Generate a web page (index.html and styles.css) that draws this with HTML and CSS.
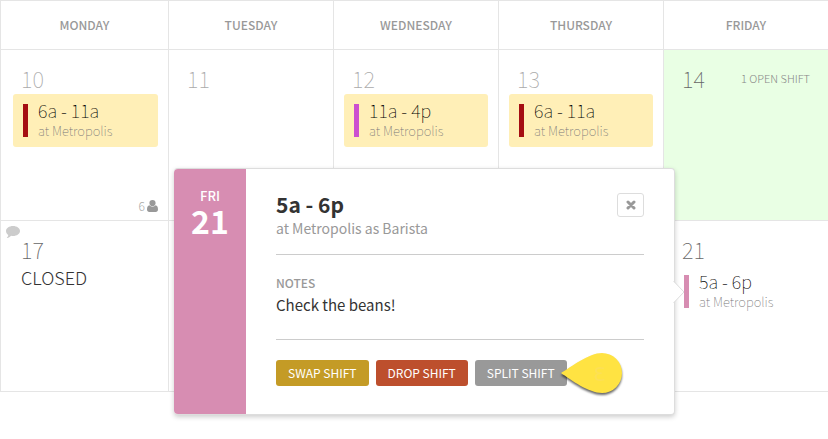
FILE: index.html
```html
<!DOCTYPE html>
<html lang="en">
<head>
  <meta charset="UTF-8" />
  <meta name="viewport" content="width=device-width, initial-scale=1" />
  <title>Schedule</title>
  <link rel="stylesheet" href="styles.css">
</head>
<body>

<!-- Calendar -->
<table class="calendar">
  <colgroup>
    <col class="first-col">
    <col>
    <col>
    <col>
    <col>
  </colgroup>
  <thead>
    <tr>
      <th scope="col">MONDAY</th>
      <th scope="col">TUESDAY</th>
      <th scope="col">WEDNESDAY</th>
      <th scope="col">THURSDAY</th>
      <th scope="col">FRIDAY</th>
    </tr>
  </thead>
  <tbody>
    <tr>
      <td class="past">
        <div class="day">
          <div class="day-head"><span class="date">10</span></div>
          <a href="#" class="shift mine red">
            <span class="time">6a - 11a</span>
            <span class="place">at Metropolis</span>
          </a>
          <div class="staff">
            <span>6</span>
            <svg width="11" height="12" viewBox="0 0 11 12" aria-hidden="true">
              <circle cx="5.5" cy="3.1" r="3.1"/>
              <path d="M2.4 5.3C.8 5.6 0 7 0 9.6 0 11.2.9 12 2.3 12h6.4c1.4 0 2.3-.8 2.3-2.4 0-2.6-.8-4-2.4-4.3-.8.9-1.8 1.4-3.1 1.4s-2.300-.5-3.100-1.400z"/>
            </svg>
          </div>
        </div>
      </td>
      <td class="past">
        <div class="day">
          <div class="day-head"><span class="date">11</span></div>
        </div>
      </td>
      <td class="past">
        <div class="day">
          <div class="day-head"><span class="date">12</span></div>
          <a href="#" class="shift mine purple">
            <span class="time">11a - 4p</span>
            <span class="place">at Metropolis</span>
          </a>
        </div>
      </td>
      <td class="past">
        <div class="day">
          <div class="day-head"><span class="date">13</span></div>
          <a href="#" class="shift mine red">
            <span class="time">6a - 11a</span>
            <span class="place">at Metropolis</span>
          </a>
        </div>
      </td>
      <td class="open">
        <div class="day">
          <div class="day-head">
            <span class="date">14</span>
            <a href="#" class="open-shift">1 OPEN SHIFT</a>
          </div>
        </div>
      </td>
    </tr>
    <tr>
      <td>
        <svg class="comment" width="14" height="12" viewBox="0 0 14 12" aria-hidden="true">
          <path d="M7 0c3.900 0 7 2.200 7 5s-3.100 5-7 5c-.7 0-1.300-.1-1.900-.2C4 10.900 2.700 11.700 1.200 12c-.4 0-.5-.3-.2-.6.6-.6 1.100-1.200 1.300-2.500C.9 8 0 6.600 0 5c0-2.800 3.100-5 7-5z"/>
        </svg>
        <div class="day">
          <div class="day-head"><span class="date">17</span></div>
          <div class="closed">CLOSED</div>
        </div>
      </td>
      <td></td>
      <td></td>
      <td></td>
      <td>
        <div class="day">
          <div class="day-head"><span class="date">21</span></div>
          <a href="#" class="shift pink">
            <span class="time">5a - 6p</span>
            <span class="place">at Metropolis</span>
          </a>
        </div>

        <!-- Shift details popover -->
        <section class="popover">
          <div class="popover-date">
            <span class="weekday">FRI</span>
            <span class="number">21</span>
          </div>
          <div class="popover-body">
            <div class="summary">
              <div>
                <h2>5a - 6p</h2>
                <p>at Metropolis as Barista</p>
              </div>
              <button class="close-btn" type="button" aria-label="Close">
                <svg width="10" height="10" viewBox="0 0 10 10" aria-hidden="true">
                  <path d="M2 2l6 6M8 2l-6 6"/>
                </svg>
              </button>
            </div>
            <div class="notes">
              <h3>NOTES</h3>
              <p>Check the beans!</p>
            </div>
            <div class="actions">
              <button class="btn swap" type="button">SWAP SHIFT</button>
              <button class="btn drop" type="button">DROP SHIFT</button>
              <div class="split-wrap">
                <button class="btn split" type="button">SPLIT SHIFT</button>
                <svg class="marker" width="62" height="42" viewBox="0 0 62 42" aria-hidden="true">
                  <path d="M0 20C10 14 28 0 41 0a20 20 0 0 1 0 40C28 40 10 27 0 20z"/>
                  <text x="32" y="28">Ɛ</text>
                </svg>
              </div>
            </div>
          </div>
          <svg class="arrow" width="12" height="24" viewBox="0 0 12 24" aria-hidden="true">
            <path class="arrow-fill" d="M0 1l11 11L0 23z"/>
            <path class="arrow-line" d="M0.500 1l10.500 11L0.500 23"/>
          </svg>
        </section>
      </td>
    </tr>
  </tbody>
</table>

</body>
</html>
```

FILE: styles.css
```css
* {
  box-sizing: border-box;
}

body {
  margin: 0;
  min-height: 100vh;
  font-family: "Noto Sans CJK SC", "Noto Sans", sans-serif;
  background-color: #fff;
  color: #333;
  overflow-x: hidden;
}

a {
  color: inherit;
  text-decoration: none;
}

h2, h3, p {
  margin: 0;
}

button {
  font-family: inherit;
  cursor: pointer;
}

/* Calendar, its right border runs off the edge of the window */
.calendar {
  width: calc(100% + 1px);
  table-layout: fixed;
  border-collapse: separate;
  border-spacing: 0;
  border-top: 1px solid #e5e5e5;
  border-left: 1px solid #e5e5e5;
}

.first-col {
  width: 168px;
}

.calendar th {
  height: 49px;
  padding: 0;
  border-right: 1px solid #e5e5e5;
  border-bottom: 1px solid #e5e5e5;
  font-size: 12px;
  line-height: 16px;
  font-weight: 500;
  color: #999;
}

.calendar td {
  position: relative;
  height: 171px;
  padding: 11px 10px 6px;
  border-right: 1px solid #e5e5e5;
  border-bottom: 1px solid #e5e5e5;
  vertical-align: top;
}

.calendar td:first-child {
  padding-left: 12px;
}

.day {
  display: flex;
  flex-direction: column;
  min-height: 153px;
}

.day-head {
  display: flex;
  align-items: center;
  justify-content: space-between;
  height: 33px;
  padding: 0 8px;
}

.date {
  font-size: 22px;
  line-height: 30px;
  font-weight: 100;
  color: #666;
}

.past .date {
  color: #aaa;
}

.open {
  background-color: #e9ffe4;
}

.open-shift {
  font-size: 11px;
  line-height: 16px;
  font-weight: 300;
  color: #888;
}

.shift {
  position: relative;
  display: flex;
  flex-direction: column;
  height: 53px;
  padding: 4px 10px 4px 25px;
  border-radius: 3px;
}

.shift::before {
  content: '';
  position: absolute;
  left: 10px;
  top: 10px;
  bottom: 10px;
  width: 5px;
}

.mine {
  background-color: #ffefb7;
}

.red::before {
  background-color: #a50e12;
}

.purple::before {
  background-color: #cc4fd0;
}

.pink::before {
  background-color: #d78db2;
}

.time {
  font-size: 18px;
  line-height: 24px;
  font-weight: 100;
  color: #000;
}

.place {
  font-size: 13px;
  line-height: 18px;
  font-weight: 100;
  color: #777;
}

.staff {
  display: flex;
  align-items: center;
  justify-content: flex-end;
  gap: 2px;
  margin-top: auto;
  font-size: 12px;
  line-height: 16px;
  font-weight: 300;
  color: #aaa;
}

.staff svg {
  fill: #999;
}

.comment {
  position: absolute;
  left: 5px;
  top: 5px;
  fill: #ccc;
}

.closed {
  padding: 0 8px;
  font-size: 18px;
  line-height: 24px;
  font-weight: 300;
}

/* Popover */
.popover {
  position: absolute;
  right: calc(100% - 11px);
  top: -53px;
  z-index: 10;
  display: flex;
  width: 501px;
  border: 1px solid #ddd;
  border-left: 0;
  border-radius: 4px;
  background-color: #fff;
  box-shadow: 0 2px 5px rgba(0,0,0,0.2);
}

.popover-date {
  display: flex;
  flex-direction: column;
  align-items: center;
  width: 72px;
  padding-top: 17px;
  border-radius: 4px 0 0 4px;
  background-color: #d78db2;
  color: white;
}

.weekday {
  font-size: 13px;
  line-height: 20px;
  font-weight: 500;
}

.number {
  font-size: 32px;
  line-height: 28px;
  font-weight: 700;
}

.popover-body {
  flex: 1;
  padding: 0 30px;
}

.summary {
  display: flex;
  align-items: flex-start;
  justify-content: space-between;
  height: 86px;
  padding-top: 24px;
  border-bottom: 1px solid #ccc;
}

.summary h2 {
  font-size: 21px;
  line-height: 22px;
  font-weight: 700;
}

.summary p {
  font-size: 14px;
  line-height: 26px;
  color: #999;
}

.close-btn {
  display: flex;
  align-items: center;
  justify-content: center;
  width: 27px;
  height: 24px;
  padding: 0;
  border: 1px solid #ddd;
  border-radius: 3px;
  background-color: white;
}

.close-btn path {
  fill: none;
  stroke: #999;
  stroke-width: 3;
  stroke-linecap: round;
}

.notes {
  height: 85px;
  padding-top: 20px;
  border-bottom: 1px solid #ccc;
}

.notes h3 {
  font-size: 12px;
  line-height: 16px;
  font-weight: 500;
  color: #999;
}

.notes p {
  font-size: 15px;
  line-height: 28px;
}

.actions {
  display: flex;
  gap: 7px;
  padding: 20px 0 28px;
}

.btn {
  display: block;
  height: 26px;
  padding: 0 12px;
  border: none;
  border-radius: 3px;
  font-size: 12px;
  line-height: 26px;
  color: white;
}

.swap {
  background-color: #c49b26;
}

.drop {
  background-color: #bd4f2d;
}

.split {
  background-color: #999;
}

.split-wrap {
  position: relative;
}

/* Marker lying over the split button */
.marker {
  position: absolute;
  left: calc(100% - 6px);
  top: -7px;
  overflow: visible;
  fill: #ffe342;
  filter: drop-shadow(0 2px 1px rgba(0,0,0,0.6));
}

.marker text {
  font-family: "DejaVu Sans", sans-serif;
  font-size: 20px;
  fill: #fde054;
}

.arrow {
  position: absolute;
  left: calc(100% - 1px);
  top: 111px;
}

.arrow-fill {
  fill: white;
}

.arrow-line {
  fill: none;
  stroke: #ddd;
}
```
